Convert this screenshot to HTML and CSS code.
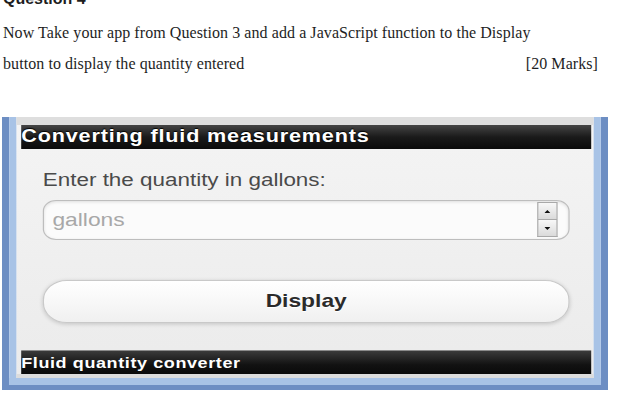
FILE: index.html
```html
<!DOCTYPE html>
<html lang="en">
<head>
  <meta charset="UTF-8">
  <meta name="viewport" content="width=device-width, initial-scale=1.0">
  <title>Question 4 - Fluid quantity converter</title>
  <link rel="stylesheet" href="styles.css">
</head>
<body>
  <div class="doc">
    <h2 class="question">Question 4</h2>
    <p class="task">Now Take your app from Question 3 and add a JavaScript function to the Display</p>
    <p class="task task-last">
      <span>button to display the quantity entered</span>
      <span>[20 Marks]</span>
    </p>
  </div>

  <!-- screenshot of the app, stretched sideways like the pasted picture -->
  <div class="window">
    <div class="window-inner">
      <div class="topband"></div>
      <div class="header">Converting fluid measurements</div>

      <div class="content">
        <label class="label" for="gallons">Enter the quantity in gallons:</label>
        <div class="field">
          <input id="gallons" type="text" placeholder="gallons">
          <div class="spinner">
            <span class="spin">
              <svg width="5" height="3" viewBox="0 0 5 3"><polygon points="2.5,0 5,3 0,3" fill="#111"/></svg>
            </span>
            <span class="spin spin-down">
              <svg width="5" height="3" viewBox="0 0 5 3"><polygon points="0,0 5,0 2.5,3" fill="#111"/></svg>
            </span>
          </div>
        </div>
        <button class="display-btn" type="button">Display</button>
      </div>

      <div class="footer">Fluid quantity converter</div>
      <div class="bottomband"></div>
    </div>
  </div>
</body>
</html>
```

FILE: styles.css
```css
body {
  margin: 0;
  background-color: #fff;
  font-family: "Liberation Serif", "Times New Roman", serif;
  color: #1e1e1e;
}
.doc {
  width: 595px;
  padding-left: 3px;
}
.question {
  margin: -11px 0 0;
  font: bold 16px/20px "Liberation Sans", Arial, sans-serif;
}
.task {
  margin: 0;
  font-size: 16px;
  line-height: 31px;
  letter-spacing: 0.07px;
}
.question + .task {
  margin-top: 8px;
}
.task-last {
  display: flex;
  justify-content: space-between;
}

/* app window */
.window {
  box-sizing: border-box;
  width: 505px;
  margin: 38px 0 0 2px;
  border: 0 solid #6d8ec3;
  border-width: 0 6px 5px;
  transform: scaleX(1.2);
  transform-origin: left top;
  font-family: "Liberation Sans", Arial, sans-serif;
}
.window-inner {
  border: 0 solid #a8c3e6;
  border-width: 0 6px 7px;
  background: linear-gradient(#f4f4f4, #ebebeb);
}
.topband {
  height: 8px;
  background-color: #dedede;
}
.header {
  height: 24px;
  margin: 0 2px 0 4px;
  padding-bottom: 2px;
  box-sizing: border-box;
  background: linear-gradient(#454545, #1a1a1a 50%, #0b0b0b);
  color: #fff;
  font-size: 18px;
  font-weight: bold;
  line-height: 22px;
  letter-spacing: 0.7px;
  text-shadow: 0 -1px 1px #000;
  white-space: nowrap;
  overflow: hidden;
}
.content {
  padding: 19.5px 20px 27px 22px;
}
.label {
  display: block;
  font-size: 18.7px;
  line-height: 22px;
  color: #4a4a4a;
}
.field {
  display: flex;
  align-items: center;
  box-sizing: border-box;
  height: 40px;
  margin-top: 9px;
  padding: 0 9px 0 7px;
  border: 1px solid #bdbdbd;
  border-radius: 11px;
  background-color: #fbfbfb;
  box-shadow: inset 0 1px 3px rgba(0, 0, 0, 0.12);
}
.field input {
  flex: 1;
  min-width: 0;
  padding: 0;
  border: none;
  outline: none;
  background: transparent;
  font: 19px "Liberation Sans", Arial, sans-serif;
  color: #333;
}
.field input::placeholder {
  color: #a8a8a8;
}
.spinner {
  display: flex;
  flex-direction: column;
  width: 17px;
  height: 35px;
}
.spin {
  flex: 1;
  display: flex;
  align-items: center;
  justify-content: center;
  border: 1px solid #a9a9a9;
  background: linear-gradient(#f8f8f8, #dadada);
}
.spin-down {
  border-top: none;
}
.display-btn {
  display: block;
  width: 100%;
  height: 43px;
  margin-top: 40px;
  border: 1px solid #c9c9c9;
  border-radius: 20px;
  background: linear-gradient(#ffffff, #f0f0f0);
  box-shadow: 0 1px 4px rgba(0, 0, 0, 0.18);
  font: bold 19px "Liberation Sans", Arial, sans-serif;
  color: #2a2a2a;
  text-shadow: 0 1px 0 #fff;
  cursor: pointer;
}
.footer {
  height: 24px;
  margin: 0 2px 0 4px;
  box-sizing: border-box;
  border-top: 1px solid #8a8a8a;
  background: linear-gradient(#3a3a3a, #121212 60%, #0a0a0a);
  color: #fff;
  font-size: 15px;
  font-weight: bold;
  line-height: 23px;
  letter-spacing: 0.5px;
  white-space: nowrap;
}
.bottomband {
  height: 4px;
  background-color: #dcdcdc;
}
```
